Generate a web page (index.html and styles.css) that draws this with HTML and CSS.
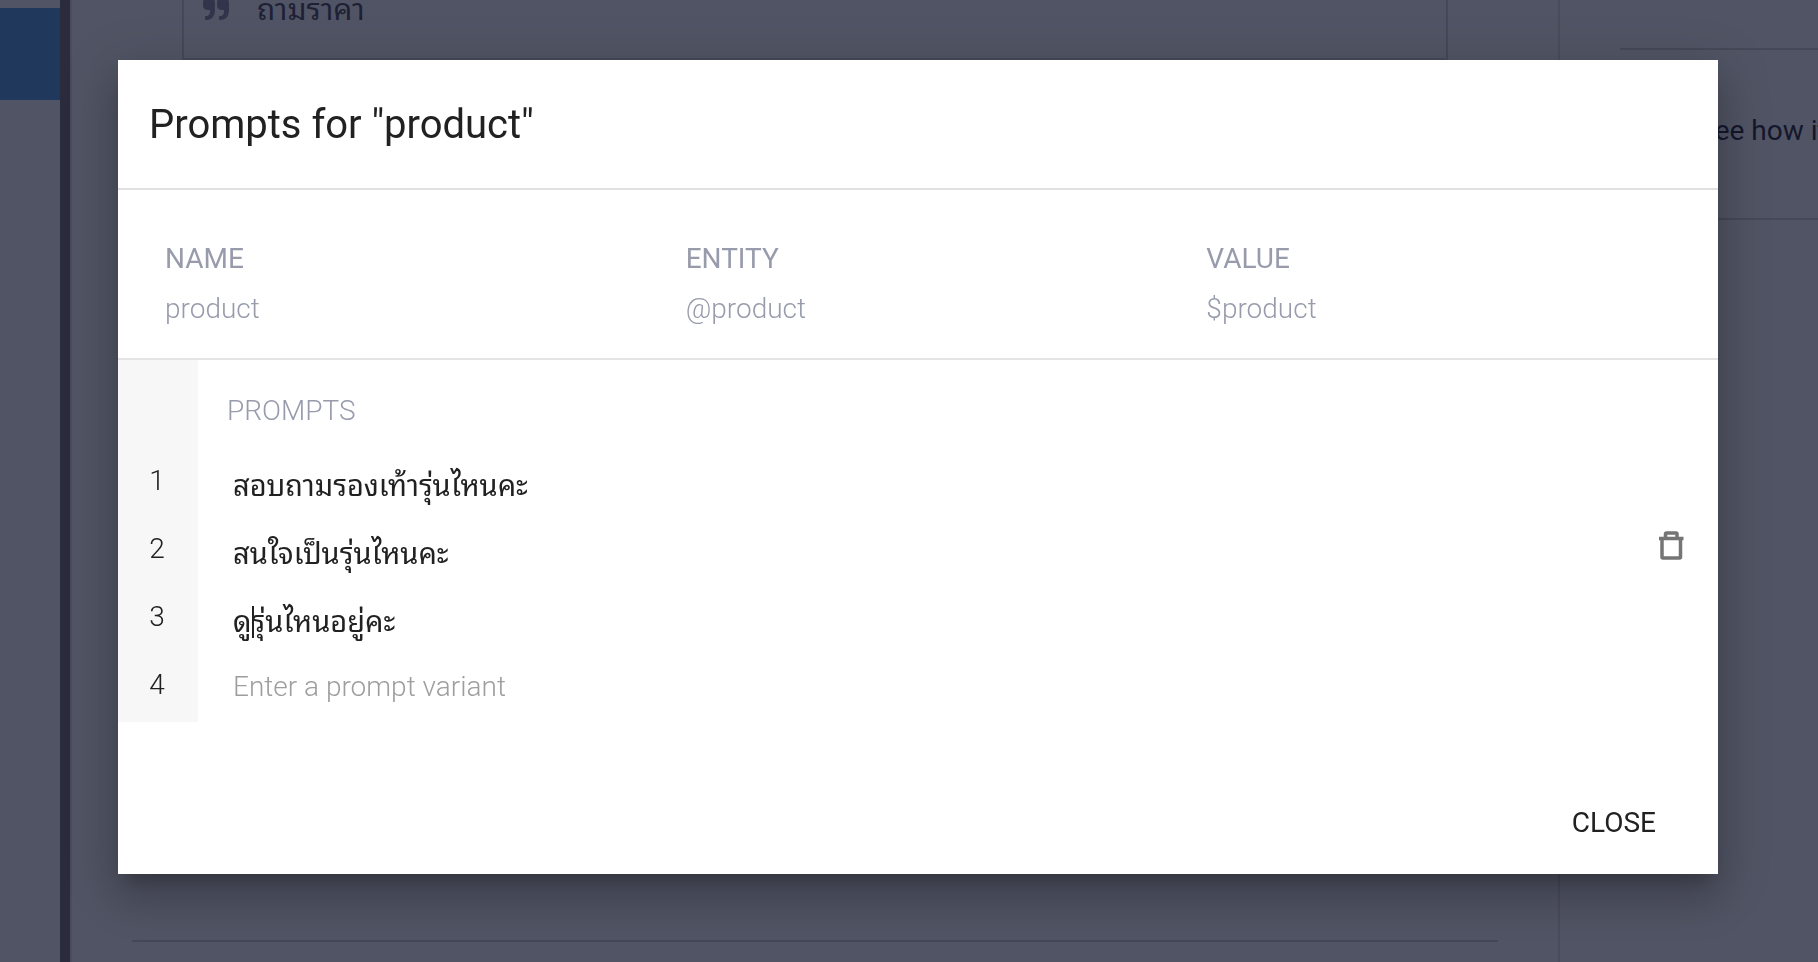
FILE: index.html
```html
<!DOCTYPE html>
<html lang="en">
<head>
<meta charset="utf-8">
<meta name="viewport" content="width=device-width, initial-scale=1">
<title>Prompts</title>
<link rel="stylesheet" href="styles.css">
</head>
<body>
<div class="app">
  <nav class="sidebar"><div class="sidebar-active"></div></nav>
  <div class="divider"></div>
  <main class="main">
    <div class="phrases">
      <div class="phrase">
        <svg class="quote" viewBox="0 2 26 20" aria-hidden="true"><path d="M5 0h2c3 0 5 2 5 5v7c0 6-3 10-9 10-1 0-1-1-1-2v-1c0-1 0-1 1-1 3 0 4-2 4-5v-1H5c-3 0-5-2-5-4V4c0-2 2-4 5-4zM19 0h2c3 0 5 2 5 5v7c0 6-3 10-9 10-1 0-1-1-1-2v-1c0-1 0-1 1-1 3 0 4-2 4-5v-1h-2c-3 0-5-2-5-4V4c0-2 2-4 5-4z"/></svg>
        <span>ถามราคา</span>
      </div>
    </div>
    <hr class="section-line">
  </main>
  <aside class="console"><div class="console-block">See how it works</div></aside>
</div>

<div class="overlay">
  <section class="dialog" role="dialog" aria-labelledby="dialog-title">
    <header class="dialog-header"><h2 class="dialog-title" id="dialog-title">Prompts for "product"</h2></header>
    <dl class="params">
      <div class="param"><dt>NAME</dt><dd>product</dd></div>
      <div class="param"><dt>ENTITY</dt><dd>@product</dd></div>
      <div class="param"><dt>VALUE</dt><dd>$product</dd></div>
    </dl>
    <div class="prompts">
      <div class="prompts-head"><span class="gutter"></span><h3 class="prompts-title">PROMPTS</h3></div>
      <div class="prompt">
        <label class="gutter" for="p1">1</label>
        <div class="field"><input class="text filled" id="p1" type="text" value="สอบถามรองเท้ารุ่นไหนคะ"></div>
      </div>
      <div class="prompt">
        <label class="gutter" for="p2">2</label>
        <div class="field"><input class="text filled" id="p2" type="text" value="สนใจเป็นรุ่นไหนคะ"></div>
        <button class="delete" type="button" aria-label="Delete prompt">
          <svg viewBox="0 0 26 30" aria-hidden="true"><path d="M4 8v18a1 1 0 0 0 1 1h16.500a1 1 0 0 0 1-1V8M1 7.500h24.500M7.500 7V3a1 1 0 0 1 1-1h9.500a1 1 0 0 1 1 1V7"/></svg>
        </button>
      </div>
      <div class="prompt">
        <label class="gutter" for="p3">3</label>
        <div class="field"><input class="text filled" id="p3" type="text" value="ดูรุ่นไหนอยู่คะ"><span class="caret"></span></div>
      </div>
      <div class="prompt">
        <label class="gutter" for="p4">4</label>
        <div class="field"><input class="text" id="p4" type="text" placeholder="Enter a prompt variant"></div>
      </div>
    </div>
    <footer class="dialog-footer"><button class="close" type="button">CLOSE</button></footer>
  </section>
</div>
</body>
</html>
```
FILE: styles.css
```css
* { box-sizing: border-box; }

body {
  margin: 0;
  height: 100vh;
  overflow: hidden;
  background: #515464;
  color: #212121;
  font-family: Roboto, "Noto Sans Thai Looped", "Noto Sans Thai", "Noto Sans", sans-serif;
  font-size: 28px;
}

.app { display: flex; height: 100vh; }

.sidebar { width: 60px; padding-top: 8px; }
.sidebar-active { height: 92px; background: #20385c; }
.divider { width: 12px; background: #2a2c3e; border-right: 2px solid #4a4c5c; }

.main {
  flex: 1;
  display: flex;
  flex-direction: column;
  justify-content: space-between;
  padding: 0 60px 20px;
}
.phrases {
  height: 60px;
  margin: 0 50px;
  border: 2px solid #464859;
  border-top: 0;
}
.phrase {
  display: flex;
  gap: 28px;
  padding-left: 19px;
  color: #1e2136;
  font-size: 30px;
  line-height: 20px;
}
.quote { width: 26px; height: 20px; fill: #31344a; }
.section-line { width: 100%; height: 2px; margin: 0; border: 0; background: #444659; }

.console {
  width: 260px;
  padding: 48px 0 0 60px;
  border-left: 2px solid #4a4c5c;
  overflow: hidden;
}
.console-block {
  padding: 60px 0 66px 78px;
  border: solid #464859;
  border-width: 2px 0;
  color: #14172c;
  line-height: 42px;
  white-space: nowrap;
}

.overlay {
  position: fixed;
  inset: 0;
  padding: 60px 100px 88px 118px;
}
.dialog {
  background: #fff;
  box-shadow: 0 14px 16px -8px rgba(0, 0, 0, .2), 0 26px 38px 4px rgba(0, 0, 0, .14), 0 10px 48px 8px rgba(0, 0, 0, .12);
}
.dialog-header {
  height: 130px;
  padding: 40px 31px;
  border-bottom: 2px solid #e0e0e0;
}
.dialog-title { margin: 0; font-size: 40px; font-weight: 400; line-height: 50px; }

.params {
  display: flex;
  margin: 0;
  padding: 44px 19px 24px;
  border-bottom: 2px solid #e4e4e4;
  color: #979bab;
  line-height: 50px;
}
.param { flex: 1; padding-left: 28px; }
.param dt { font-weight: 400; }
.param dd { margin: 0; font-weight: 300; }

.prompts-head, .prompt { display: flex; }
.prompts-head { height: 90px; }
.gutter {
  width: 80px;
  padding-right: 2px;
  background: #f7f7f7;
  text-align: center;
  font-weight: 300;
  line-height: 62px;
}
.prompts-title {
  margin: 0;
  padding: 20px 29px;
  color: #979bab;
  font-size: 28px;
  font-weight: 300;
  line-height: 62px;
}
.prompt { height: 68px; }
.field { position: relative; flex: 1; }
.text {
  width: 100%;
  height: 64px;
  padding: 0 35px;
  border: 0;
  outline: 0;
  background: none;
  color: #212121;
  font: inherit;
}
.text::placeholder { color: #9e9e9e; font-weight: 300; }
.filled { height: 66px; font-size: 29px; }
.caret {
  position: absolute;
  top: 20px;
  left: 54px;
  width: 2px;
  height: 32px;
  background: #212121;
}
.delete {
  display: flex;
  align-items: center;
  justify-content: center;
  width: 48px;
  height: 56px;
  margin-right: 23px;
  padding: 0;
  border: 0;
  background: none;
}
.delete svg { width: 26px; height: 30px; fill: none; stroke: #757575; stroke-width: 3.5; }

.dialog-footer {
  display: flex;
  justify-content: flex-end;
  padding: 64px 46px 16px;
}
.close {
  height: 72px;
  padding: 0 16px;
  border: 0;
  background: none;
  color: #212121;
  font: inherit;
}
```
